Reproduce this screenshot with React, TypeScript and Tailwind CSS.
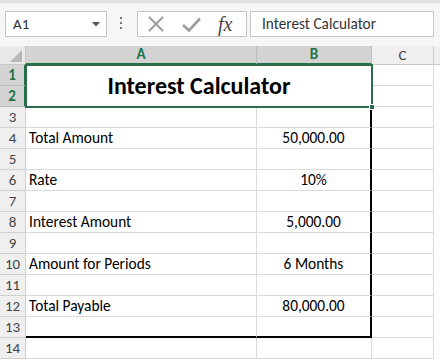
import React from "react";

const font = { fontFamily: "Carlito, Lato, 'Liberation Sans', sans-serif" };

type Row = { n: number; a?: string; b?: string };

const rows: Row[] = [
  { n: 3 },
  { n: 4, a: "Total Amount", b: "50,000.00" },
  { n: 5 },
  { n: 6, a: "Rate", b: "10%" },
  { n: 7 },
  { n: 8, a: "Interest Amount", b: "5,000.00" },
  { n: 9 },
  { n: 10, a: "Amount for Periods", b: "6 Months" },
  { n: 11 },
  { n: 12, a: "Total Payable", b: "80,000.00" },
  { n: 13 },
  { n: 14 },
];

function FormulaBar() {
  return (
    <div className="relative h-[46px] border-t-[3px] border-[#e1e1e1] bg-[#f6f6f6]">
      <div className="absolute left-[5px] top-[8px] flex h-[26px] w-[102px] items-center justify-between border border-[#c6c6c6] bg-white pl-[7px] pr-[6px] text-[15px] text-[#333]">
        <span>A1</span>
        <svg width="8" height="5" viewBox="0 0 8 5">
          <polygon points="0,0 8,0 4,4.5" fill="#555" />
        </svg>
      </div>
      <div className="absolute left-[120px] top-[14px] flex flex-col gap-[3px]">
        <span className="block h-[2px] w-[2px] bg-[#777]" />
        <span className="block h-[2px] w-[2px] bg-[#777]" />
        <span className="block h-[2px] w-[2px] bg-[#777]" />
      </div>
      <div className="absolute left-[137px] top-[8px] flex h-[26px] w-[110px] items-center border border-[#c6c6c6] bg-white">
        <svg className="ml-[9px]" width="18" height="16" viewBox="0 0 18 16">
          <path d="M2 1 L16 15 M16 1 L2 15" stroke="#9c9c9c" strokeWidth="2" fill="none" />
        </svg>
        <svg className="ml-[17px]" width="19" height="15" viewBox="0 0 19 15">
          <path d="M1 8 L7 13.5 L18 1.5" stroke="#9c9c9c" strokeWidth="2.6" fill="none" />
        </svg>
        <span
          className="ml-[17px] text-[20px] italic leading-none text-[#444]"
          style={{ fontFamily: "'Liberation Serif', 'DejaVu Serif', serif" }}
        >
          fx
        </span>
      </div>
      <div className="absolute left-[250px] top-[8px] flex h-[26px] w-[184px] items-center border border-[#c6c6c6] bg-white pl-[11px] text-[15.3px] text-[#333]">
        Interest Calculator
      </div>
    </div>
  );
}

export default function App() {
  return (
    <div className="h-[359px] w-[440px] overflow-hidden bg-white" style={font}>
      <FormulaBar />
      <div className="grid grid-cols-[26px_231px_115px_62px_6px] grid-rows-[19px_repeat(14,21px)] text-[15.4px] text-black">
        {/* column headers */}
        <div className="relative border-b border-r border-[#c8c8c8] bg-[#e9e9e9]">
          <svg className="absolute bottom-[2px] right-[3px]" width="12" height="12" viewBox="0 0 12 12">
            <polygon points="12,0 12,12 0,12" fill="#b9b9b9" />
          </svg>
        </div>
        <div className="flex items-center justify-center border-b-2 border-r border-b-[#217346] border-r-[#bdbdbd] bg-[#d3d3d3] text-[15px] font-bold text-[#217346]">
          A
        </div>
        <div className="flex items-center justify-center border-b-2 border-r border-b-[#217346] border-r-[#bdbdbd] bg-[#d3d3d3] text-[15px] font-bold text-[#217346]">
          B
        </div>
        <div className="flex items-center justify-center border-b border-r border-[#c8c8c8] bg-[#efefef] text-[15px] text-[#444]">
          C
        </div>
        <div className="border-b border-[#c8c8c8] bg-[#efefef]" />

        {/* rows 1-2 */}
        <div className="flex items-center justify-center border-b border-r-2 border-b-[#bdbdbd] border-r-[#217346] bg-[#d3d3d3] text-[15px] font-bold text-[#217346]">
          1
        </div>
        <div className="relative col-span-2 row-span-2 flex items-center justify-center text-[24px] font-bold">
          <div className="pointer-events-none absolute -left-[1px] -top-[1px] -right-[1px] -bottom-[1px] border-2 border-[#2e6b4a]" />
          <div className="pointer-events-none absolute -bottom-[3px] -right-[3px] h-[6px] w-[6px] border border-white bg-[#2e6b4a]" />
          Interest Calculator
        </div>
        <div className="border-b border-r border-[#dadada]" />
        <div />
        <div className="flex items-center justify-center border-b border-r-2 border-b-[#bdbdbd] border-r-[#217346] bg-[#d3d3d3] text-[15px] font-bold text-[#217346]">
          2
        </div>
        <div className="border-b border-r border-[#dadada]" />
        <div />

        {rows.map((r) => (
          <React.Fragment key={r.n}>
            <div className="flex items-center justify-center border-b border-r border-[#d0d0d0] bg-[#efefef] text-[15px] text-[#444]">
              {r.n}
            </div>
            <div
              className={
                r.n === 13
                  ? "flex items-center border-b-2 border-r border-b-black border-r-[#dadada] pl-[3px]"
                  : "flex items-center border-b border-r border-[#dadada] pl-[3px]"
              }
            >
              {r.a}
            </div>
            <div
              className={
                r.n === 14
                  ? "flex items-center justify-center border-b border-r border-[#dadada]"
                  : r.n === 13
                    ? "flex items-center justify-center border-b-2 border-r-2 border-black"
                    : "flex items-center justify-center border-b border-r-2 border-b-[#dadada] border-r-black"
              }
            >
              {r.b}
            </div>
            <div className="border-b border-r border-[#dadada]" />
            <div />
          </React.Fragment>
        ))}
      </div>
    </div>
  );
}
